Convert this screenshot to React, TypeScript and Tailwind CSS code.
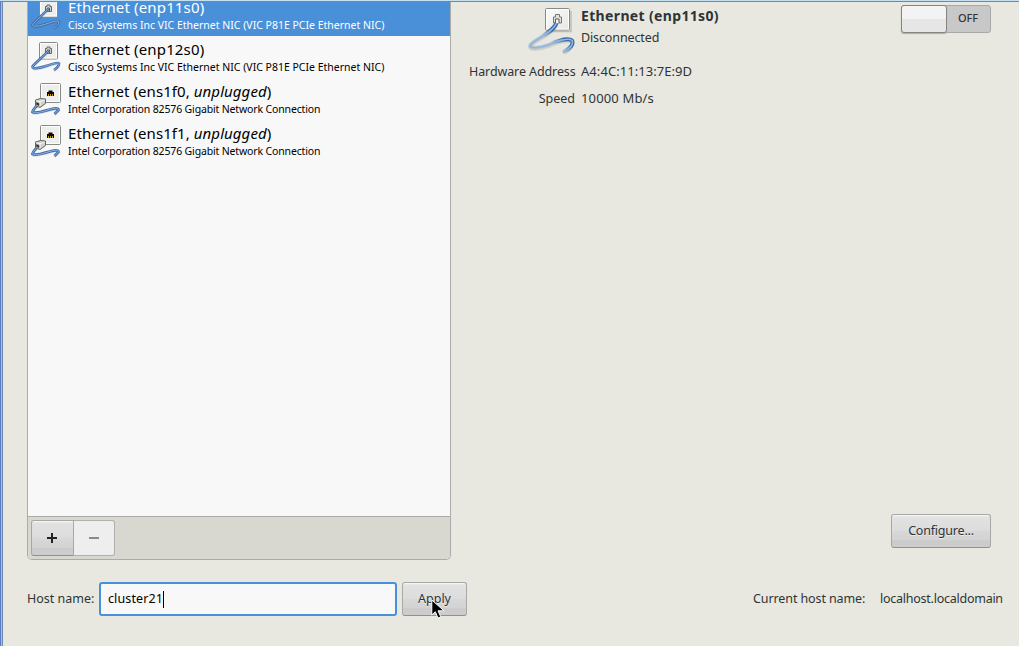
import React from "react";

function LargePluggedIcon({ className }: { className: string }) {
  const cable = "M29.500 17C26 27 9 32 3.500 38.500C1 43 13 42 22 38.500C31 34.500 42 31.500 45 34.500C47 38 43 43 36 46";
  return (
    <svg viewBox="0 0 48 48" className={className} fill="none">
      <defs>
        <linearGradient id="plate" x1="0" y1="0" x2="1" y2="1"><stop stopColor="#fcfcfc" /><stop offset="1" stopColor="#e6e6e4" /></linearGradient>
        <linearGradient id="cable" gradientUnits="userSpaceOnUse" x1="43" y1="38" x2="37" y2="46"><stop stopColor="#3465a4" /><stop offset="1" stopColor="#3465a4" stopOpacity=".15" /></linearGradient>
      </defs>
      <path d="M20 25.500H44V5" stroke="#bdbdb6" strokeWidth="1.5" />
      <rect x="18.500" y="2.500" width="24" height="21.500" rx="1" fill="url(#plate)" stroke="#888a85" />
      <rect x="19.500" y="3.500" width="22" height="19.500" stroke="#ffffff" />
      <path d="M26.500 17v-6h2V8.500h4V11h2v6z" fill="#e2e2df" stroke="#777974" />
      <path d="M28.500 17v-4h3.500v4" fill="#f7f7f7" stroke="#5b5c58" />
      <path d={cable} transform="translate(0 1.500)" stroke="#77776f" strokeOpacity=".2" strokeWidth="3.800" />
      <path d={cable} stroke="url(#cable)" strokeWidth="3.900" />
      <path d={cable} stroke="#8db5e4" strokeWidth="1.700" />
    </svg>
  );
}

function PluggedIcon({ className }: { className: string }) {
  const cable = "M18.500 9.500C14 15 6 21 2.500 25.500C2 28.500 10 27 16 25C22 23 28 21 29 22.500C29 25 27 27 24 29";
  return (
    <svg viewBox="0 0 32 32" className={className} fill="none">
      <rect x="9.500" y="1.500" width="18" height="16.500" rx="1" fill="#eeeeec" stroke="#888a85" />
      <rect x="10.500" y="2.500" width="16" height="14.500" stroke="#ffffff" />
      <path d="M15.500 12.500v-5h1.500V6h3v1.500h1.500v5z" fill="#d0d0cd" stroke="#666762" />
      <path d="M17.500 12V9h2v3" stroke="#555753" />
      <path d={cable} transform="translate(0 1)" stroke="#555" strokeOpacity=".15" strokeWidth="2.500" />
      <path d={cable} stroke="#3e6eae" strokeWidth="2.600" />
      <path d={cable} stroke="#8bb3e2" strokeWidth=".9" />
    </svg>
  );
}

function UnpluggedIcon({ className }: { className: string }) {
  const cable = "M7.500 25C4.500 28 3 30 2.500 32C5 34 13 31.500 18 30C24 28 28.500 27.500 28.500 30L24.500 34";
  return (
    <svg viewBox="0 0 32 36" className={className} fill="none">
      <rect x="10.500" y="3.500" width="20" height="19" rx="1" fill="#eeeeec" stroke="#888a85" />
      <rect x="11.500" y="4.500" width="18" height="17" stroke="#ffffff" />
      <path d="M17 16v-4h1.500v-1.500h4V12H24v4z" fill="#0a0a0a" />
      <path d="M18.500 16v-2m2 2v-2m2 2v-2" stroke="#c49a00" strokeWidth="1" />
      <path d={cable} transform="translate(0 1)" stroke="#555" strokeOpacity=".15" strokeWidth="2.500" />
      <path d={cable} stroke="#3e6eae" strokeWidth="2.800" />
      <path d={cable} stroke="#8bb3e2" strokeWidth="1" />
      <path d="M5.500 20l5-1.500 5 .500v4.500L10 27.500l-4.500-2z" fill="#cfcfcb" stroke="#62645f" />
      <path d="M6.500 20.700l3.500 1 4.500-1.500M10 22v4" stroke="#f8f8f6" />
      <path d="M6.500 22.500l2.500 1v2l-2.500-1z" fill="#222" stroke="#444" strokeWidth=".6" />
    </svg>
  );
}

function Row({ name, unplugged, detail, selected }: { name: string; unplugged?: boolean; detail: string; selected?: boolean }) {
  return (
    <div className={"flex h-[42px] shrink-0 pl-[2px] " + (selected ? "bg-[#4a90d9] text-white" : "text-black")}>
      {unplugged ? <UnpluggedIcon className="mt-[2px] h-[36px] w-[32px]" /> : <PluggedIcon className="mt-[5px] h-[32px] w-[32px]" />}
      <div className="ml-[6px] flex flex-col whitespace-nowrap pt-[4px]">
        <div className={"text-[15px] leading-[18px] " + (unplugged ? "tracking-[0.08px]" : "tracking-[0.15px]")}>
          {name}
          {unplugged && <span>, <i>unplugged</i></span>})
        </div>
        <div className={"pt-px text-[10.5px] leading-[16px] " + (unplugged ? "tracking-[-0.15px]" : "tracking-[0px]")}>{detail}</div>
      </div>
    </div>
  );
}

const face = "border border-[#a8a8a8] border-b-[#91918a] bg-[linear-gradient(#fafafa_0,#e2e2e2_2px,#dcdcdc_50%,#d7d7d7_52%,#d3d3d3_78%,#cbcbcb_80%,#cdcdcb_100%)]";

export default function App() {
  return (
    <div className="relative flex h-[646px] w-[1019px] flex-col overflow-hidden bg-[#e8e8e0] font-['Noto_Sans','Open_Sans',sans-serif] text-[12.5px] text-[#2e3436]">
      <div className="h-[2px] shrink-0 border-b border-[#6c8aa9] bg-[#c5e0f2]" />
      <div className="flex min-h-0 flex-1">
        <div className="w-[3px] shrink-0 border-l border-r border-l-[#5b7fc6] border-r-[#7088ac] bg-[#a4bde4]" />
        <div className="flex min-w-0 flex-1 flex-col pl-[24px]">
          <div className="flex h-[558px] shrink-0">
            <div className="flex w-[424px] shrink-0 flex-col overflow-hidden rounded-b-[5px] border border-t-0 border-[#ababab] bg-[#f8f8f8]">
              <div className="-mt-[8px] flex h-[522px] shrink-0 flex-col">
                <Row name="Ethernet (enp11s0" detail="Cisco Systems Inc VIC Ethernet NIC (VIC P81E PCIe Ethernet NIC)" selected />
                <Row name="Ethernet (enp12s0" detail="Cisco Systems Inc VIC Ethernet NIC (VIC P81E PCIe Ethernet NIC)" />
                <Row name="Ethernet (ens1f0" unplugged detail="Intel Corporation 82576 Gigabit Network Connection" />
                <Row name="Ethernet (ens1f1" unplugged detail="Intel Corporation 82576 Gigabit Network Connection" />
              </div>
              <div className="flex flex-1 border-t border-[#ababab] bg-[#d8d8d0] pl-[3px] pt-[3px]">
                <button className={"flex h-[36px] w-[43px] items-center justify-center rounded-l-[3px] " + face}>
                  <svg className="mr-px h-[10px] w-[10px]" viewBox="0 0 10 10"><path d="M0 5h10M5 0v10" stroke="#222" strokeWidth="2" /></svg>
                </button>
                <button className="flex h-[36px] w-[41px] items-center justify-center rounded-r-[3px] border border-l-0 border-[#b0b0ac] bg-[#eeeeee]">
                  <svg className="h-[2px] w-[10px]" viewBox="0 0 10 2"><path d="M0 1h10" stroke="#8a8a8a" strokeWidth="2" /></svg>
                </button>
              </div>
            </div>
            <div className="flex flex-1 flex-col pl-[18px] pr-[28px]">
              <div className="flex">
                <div className="flex w-[106px] shrink-0 justify-end"><LargePluggedIcon className="mt-[4px] h-[48px] w-[48px]" /></div>
                <div className="ml-[6px] flex-1 whitespace-nowrap pt-[4px]">
                  <div className="text-[14px] font-bold leading-[20px] tracking-[0.35px]">Ethernet (enp11s0)</div>
                  <div className="pt-[2px] leading-[20px] tracking-[-0.12px]">Disconnected</div>
                </div>
                <div className="mt-[3px] flex h-[28px] w-[90px] rounded-[3px] border border-[#a8a8a8] bg-[#c8c8c8]">
                  <div className="-my-px -ml-px w-[46px] rounded-[3px] border border-[#85867f] bg-[linear-gradient(#f3f3f3_0_50%,#e6e6e6_50%)] shadow-[0_1px_1px_#aaa]" />
                  <div className="flex-1 pr-px text-center text-[11px] font-medium leading-[24px]">OFF</div>
                </div>
              </div>
              <div className="mt-[7px] flex h-[20px] items-baseline gap-[6px] leading-[20px]"><span className="w-[106px] whitespace-nowrap text-right tracking-[-0.1px]">Hardware Address</span><span className="text-[13px] tracking-[0.06px]">A4:4C:11:13:7E:9D</span></div>
              <div className="mt-[7px] flex h-[20px] items-baseline gap-[6px] leading-[20px]"><span className="w-[106px] text-right">Speed</span><span className="text-[13px] tracking-[0.15px]">10000 Mb/s</span></div>
              <button className={"mb-[12px] ml-auto mt-auto h-[34px] w-[100px] rounded-[3px] tracking-[-0.2px] [text-shadow:0_1px_#eee] " + face}>Configure...</button>
            </div>
          </div>
          <div className="mt-[22px] flex h-[34px] items-center">
            <span className="w-[72px] whitespace-nowrap">Host name:</span>
            <div className="flex h-[34px] w-[298px] items-center rounded-[3px] border-2 border-[#4a90d9] bg-[#f8f8f8] pl-[7px] text-black">
              <span className="tracking-[0.12px]">cluster21</span><span className="h-[17px] w-px bg-black" />
            </div>
            <button className={"ml-[5px] h-[34px] w-[65px] rounded-[3px] [text-shadow:0_1px_#eee] " + face}>Apply</button>
            <div className="ml-auto flex whitespace-nowrap pr-[16px]"><span className="w-[127px] tracking-[-0.1px]">Current host name:</span><span className="w-[123px] tracking-[-0.25px]">localhost.localdomain</span></div>
          </div>
        </div>
      </div>
      <svg className="absolute left-[431px] top-[599px] h-[21px] w-[14px]" viewBox="0 0 14 21"><path d="M.8 1v15l3.500-3.300 2.700 6.300 2.800-1.200-2.800-6H13z" fill="#000" stroke="#fff" strokeWidth="1" /></svg>
    </div>
  );
}
